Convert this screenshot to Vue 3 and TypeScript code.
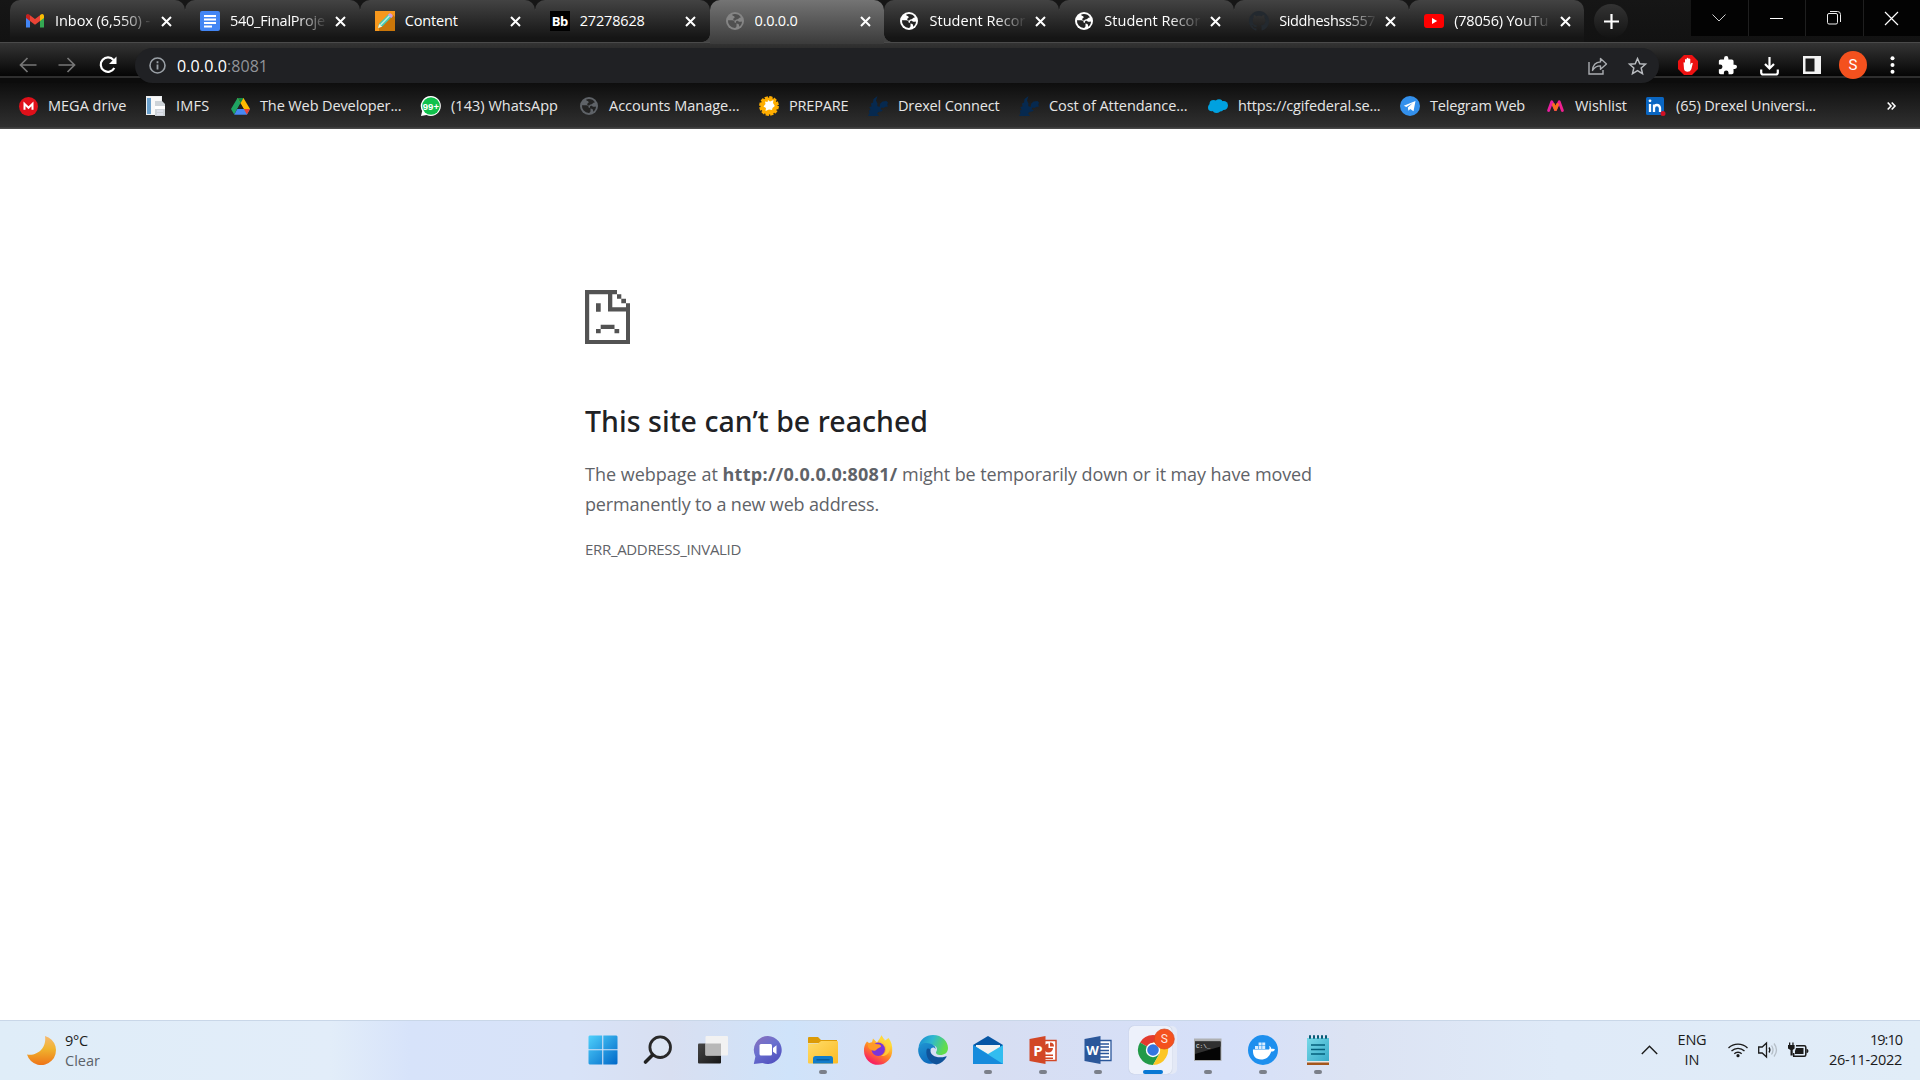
<script setup lang="ts">
interface Tab { icon: string; title: string; w: number; active?: boolean; faded?: boolean }
interface Bookmark { icon: string; label: string; slot: number; w: number }

const tabs: Tab[] = [
  { icon: 'gmail', title: 'Inbox (6,550) -', w: 95, faded: true },
  { icon: 'docs', title: '540_FinalProje', w: 95, faded: true },
  { icon: 'pencil', title: 'Content', w: 53 },
  { icon: 'bb', title: '27278628', w: 65 },
  { icon: 'globeGrey', title: '0.0.0.0', w: 43, active: true },
  { icon: 'globe', title: 'Student Recor', w: 96, faded: true },
  { icon: 'globe', title: 'Student Recor', w: 96, faded: true },
  { icon: 'github', title: 'Siddheshss557', w: 96, faded: true },
  { icon: 'youtube', title: '(78056) YouTu', w: 94, faded: true },
]

const bookmarks: Bookmark[] = [
  { icon: 'mega', label: 'MEGA drive', slot: 128, w: 78.5 },
  { icon: 'imfs', label: 'IMFS', slot: 84, w: 33.5 },
  { icon: 'drive', label: 'The Web Developer...', slot: 191, w: 141.5 },
  { icon: 'whatsapp', label: '(143) WhatsApp', slot: 158, w: 107 },
  { icon: 'globeDark', label: 'Accounts Manage...', slot: 180, w: 130.5 },
  { icon: 'badge', label: 'PREPARE', slot: 109, w: 59.5 },
  { icon: 'dragon', label: 'Drexel Connect', slot: 151, w: 101.5 },
  { icon: 'dragon', label: 'Cost of Attendance...', slot: 189, w: 138.5 },
  { icon: 'cloud', label: 'https://cgifederal.se...', slot: 192, w: 142.5 },
  { icon: 'telegram', label: 'Telegram Web', slot: 145, w: 95 },
  { icon: 'myntra', label: 'Wishlist', slot: 101, w: 52 },
  { icon: 'linkedin', label: '(65) Drexel Universi...', slot: 175, w: 140 },
]

const apps = ['start', 'search', 'taskview', 'chat', 'explorer', 'firefox', 'edge', 'mail', 'powerpoint', 'word', 'chrome', 'cmd', 'docker', 'notepad']
const running = ['explorer', 'mail', 'powerpoint', 'word', 'cmd', 'docker', 'notepad']

// Spreads a label's letters evenly so that it takes the given width.
const vFit = {
  mounted(el: HTMLElement, binding: { value: number }) {
    const n = (el.textContent ?? '').length
    const width = el.getBoundingClientRect().width
    if (n > 0) el.style.letterSpacing = `${((binding.value - width) / n).toFixed(3)}px`
  },
}
</script>

<template>
  <div class="screen">
    <header class="strip">
      <div class="tabs">
        <div v-for="(t, i) in tabs" :key="i" class="tab" :class="{ active: t.active, sep: i !== 3 && i !== 4 && i !== 8 }">
          <span class="fav">
            <svg v-if="t.icon === 'gmail'" width="20" height="20" viewBox="0 0 20 20"><path d="M1 4.5v12h4V9z" fill="#4285f4" /><path d="M19 4.5v12h-4V9z" fill="#34a853" /><path d="M15 4.2V10l4-3V5c0-2-2-2.600-3.200-1.500z" fill="#fbbc04" /><path d="M5 10V4.200l5 3.800 5-3.800V10l-5 3.800z" fill="#ea4335" /><path d="M1 5v2l4 3V4.200l-.800-.700C3 2.400 1 3 1 5z" fill="#c5221f" /></svg>
            <svg v-else-if="t.icon === 'docs'" width="20" height="20" viewBox="0 0 20 20"><rect width="20" height="20" rx="2" fill="#4285f4" /><path d="M4 5h12M4 8.500h12M4 12h12M4 15.500h8" stroke="#fff" stroke-width="1.800" /></svg>
            <svg v-else-if="t.icon === 'pencil'" width="20" height="20" viewBox="0 0 20 20"><path d="M0 0h20v20H0z" fill="#f7981d" /><path d="M4 17 18 4l2 2v14H4z" fill="#ca7609" /><path d="m3 17 1.200-4.500L14 2.800l3 3L7.300 15.600z" fill="#46c8b3" /><path d="m5.500 14 9-9.300" stroke="#b7f1dc" stroke-width="1.600" /><path d="m13 3.800 3.200 3.100 1.500-1.500c.8-.8-2.200-3.800-3.200-3z" fill="#d79bdc" /><path d="m3 17 1.200-4 2.900 2.800z" fill="#fff0cc" /></svg>
            <span v-else-if="t.icon === 'bb'" class="bb">Bb</span>
            <svg v-else-if="t.icon === 'github'" width="20" height="20" viewBox="0 0 16 16"><path fill="#23292f" d="M8 0C3.580 0 0 3.580 0 8c0 3.540 2.290 6.530 5.470 7.590.4.070.55-.17.55-.38 0-.19-.01-.82-.01-1.490-2.010.37-2.530-.49-2.690-.94-.09-.23-.48-.94-.82-1.130-.28-.15-.68-.52-.01-.53.63-.01 1.080.58 1.230.82.72 1.210 1.870.87 2.330.66.070-.52.280-.87.510-1.070-1.780-.2-3.640-.89-3.640-3.950 0-.87.310-1.590.820-2.150-.08-.2-.36-1.020.080-2.120 0 0 .67-.21 2.200.82.64-.18 1.320-.27 2-.27s1.360.09 2 .27c1.530-1.040 2.200-.82 2.200-.82.44 1.100.160 1.920.080 2.120.510.560.820 1.270.820 2.150 0 3.070-1.870 3.750-3.650 3.950.290.250.540.730.540 1.480 0 1.070-.01 1.930-.01 2.200 0 .210.150.460.550.380A8.010 8.010 0 0 0 16 8c0-4.420-3.580-8-8-8z" /></svg>
            <svg v-else-if="t.icon === 'youtube'" width="20" height="20" viewBox="0 0 20 20"><rect y="3" width="20" height="14" rx="3" fill="#f00" /><path d="m8 7 5.200 3L8 13z" fill="#fff" /></svg>
            <svg v-else width="18" height="18" viewBox="0 0 18 18"><circle cx="9" cy="9" r="9" :fill="t.icon === 'globe' ? '#fff' : '#858585'" /><path d="M2 8.200h4c2.200 0 2.700 1 2.700 2.600h1.800v3.100c0 1.100-.8 1.500-1.700 2.100A7 7 0 0 1 2 8.200zM6 2.700C9 1.300 13.500 2.400 15 5.500c-1.300 0-1.800.3-2.600 1.200-.8.800-3.300.6-3.300 2-1-.3-1.900-.5-1.900-1.700 0-1 1.500-.7 1.500-1.800 0-1.300-1.700-.9-2.700-2.500zM16 9.500c0 2-1 4-2.800 5.300 0-1.800-.2-2.900-1.700-3.100-1-.1-1.700-.8-1.500-1.700.2-1.400 1.600-1.300 2.300-.8.900.6 2.200.9 3.700.3z" :fill="t.icon === 'globe' ? '#252525' : '#505050'" /></svg>
          </span>
          <span class="title" :class="{ faded: t.faded }"><span v-fit="t.w" class="txt">{{ t.title }}</span></span>
          <svg class="close" width="11" height="11" viewBox="0 0 11 11"><path d="m1 1 9 9M10 1l-9 9" stroke="#fff" stroke-width="2" /></svg>
        </div>
      </div>
      <div class="newtab"><svg width="15" height="15" viewBox="0 0 15 15"><path d="M7.500 0v15M0 7.500h15" stroke="#fff" stroke-width="2.200" /></svg></div>
      <div class="wbtns">
        <div><svg width="14" height="8" viewBox="0 0 14 8"><path d="m.5.500 6.500 6.500L13.500.500" fill="none" stroke="#ccc" /></svg></div>
        <div><svg width="13" height="13" viewBox="0 0 13 13"><path d="M0 6.500h13" stroke="#fff" /></svg></div>
        <div><svg width="14" height="14" viewBox="0 0 14 14" fill="none" stroke="#eee"><rect x=".5" y="2.500" width="10" height="10.500" rx="1.500" /><path d="M3 .5h7.500a3 3 0 0 1 3 3V11" /></svg></div>
        <div><svg width="13" height="13" viewBox="0 0 13 13"><path d="m0 0 13 13M13 0 0 13" stroke="#fff" stroke-width="1.200" /></svg></div>
      </div>
    </header>

    <div class="toolbar">
      <div class="nav"><svg width="18" height="16" viewBox="0 0 18 16" fill="none" stroke="#777" stroke-width="1.700"><path d="M17.500 8H1.500M8.500 1l-7 7 7 7" /></svg></div>
      <div class="nav"><svg width="18" height="16" viewBox="0 0 18 16" fill="none" stroke="#777" stroke-width="1.700"><path d="M.5 8h16M9.500 1l7 7-7 7" /></svg></div>
      <div class="nav"><svg width="20" height="18" viewBox="0 0 20 18"><path d="M15.500 4A7.200 7.200 0 1 0 16.300 12" fill="none" stroke="#fff" stroke-width="2.200" /><path d="M18.500.500v7.500H11z" fill="#fff" /></svg></div>
      <div class="omni">
        <svg class="info" width="17" height="17" viewBox="0 0 17 17"><circle cx="8.500" cy="8.500" r="7.500" fill="none" stroke="#9aa0a6" stroke-width="1.600" /><path d="M8.500 7.500v5M8.500 4.300v1.900" stroke="#9aa0a6" stroke-width="1.800" /></svg>
        <span v-fit="50" class="host">0.0.0.0</span><span v-fit="41" class="port">:8081</span>
        <span class="grow"></span>
        <svg class="share" width="20" height="18" viewBox="0 0 20 18" fill="none" stroke="#aaadb1" stroke-width="1.400"><path d="M1 5v12h14v-4" /><path d="M4.500 13.500C4.800 8 7.500 5.200 12.500 4.900V1.500l6 5.400-6 5.300V8.900c-4 0-6.200 1.500-8 4.600z" stroke-linejoin="round" /></svg>
        <svg width="19" height="18" viewBox="0 0 19 18"><path d="m9.500 1.500 2.300 5.200 5.700.5-4.300 3.800 1.300 5.600-5-3-5 3L5.800 11 1.500 7.200l5.700-.5z" fill="none" stroke="#b8bbbf" stroke-width="1.500" /></svg>
      </div>
      <div class="act a1"><svg width="20" height="20" viewBox="0 0 20 20"><path d="M6 0h8l6 6v8l-6 6H6l-6-6V6z" fill="#ed1111" /><path d="M5.500 7.500q1-.8 1.500.3V10V4.500q.9-1.200 1.700 0V8 3.300q1-1.200 1.800 0V8 4q1-1.200 1.800 0v6l.6-1.600q1.100-1.200 1.900-.2l-1.500 6q-1 2.500-3.800 2.500-3 0-3.500-2.700z" fill="#fff" /></svg></div>
      <div class="act a2"><svg width="19" height="19" viewBox="0 0 22 22"><path fill="#fff" d="M19.500 10H18V6c0-1.100-.9-2-2-2h-4V2.500a2.500 2.500 0 0 0-5 0V4H3c-1.100 0-1.990.9-1.990 2v3.800H2.500a2.700 2.700 0 0 1 0 5.400H1V19c0 1.100.9 2 2 2h3.800v-1.500a2.700 2.700 0 0 1 5.400 0V21H16c1.100 0 2-.9 2-2v-4h1.500a2.500 2.500 0 0 0 0-5z" /></svg></div>
      <div class="act a3"><svg class="dl" width="19" height="19" viewBox="0 0 19 19" fill="none" stroke="#fff" stroke-width="2.200"><path d="M9.500 0v11M5 7l4.500 4.500L14 7M1.200 12.500v3q0 2 2 2h12.600q2 0 2-2v-3" /></svg></div>
      <div class="act a4"><svg width="18" height="18" viewBox="0 0 18 18"><path d="M0 0h18v18H0z" fill="#f2f2f2" /><path d="M2.500 2.500h9v13h-9z" fill="#1a1a1a" /></svg></div>
      <div class="act a5"><span class="avatar">S</span></div>
      <div class="act a6"><svg width="5" height="18" viewBox="0 0 5 18" fill="#fff"><circle cx="2.500" cy="2.200" r="2" /><circle cx="2.500" cy="9" r="2" /><circle cx="2.500" cy="15.800" r="2" /></svg></div>
    </div>

    <nav class="marks">
      <div v-for="b in bookmarks" :key="b.label" class="mark" :style="{ width: b.slot + 'px' }">
        <span class="mi">
          <svg v-if="b.icon === 'mega'" width="19" height="19" viewBox="0 0 19 19"><circle cx="9.500" cy="9.500" r="9.500" fill="#e0101a" /><path d="M5.500 12.700V6.800l4 4 4-4v5.900" fill="none" stroke="#fff" stroke-width="2" /></svg>
          <svg v-else-if="b.icon === 'imfs'" width="20" height="20" viewBox="0 0 20 20"><path d="M0 0h16v19H0z" fill="#eceef0" /><path d="M1 2h4v16H1z" fill="#6aa0cc" /><path d="M5 1h10v18H5z" fill="#f8f8f8" /><path d="M9 5h7l3 3v12H9z" fill="#cdd3d8" /><path d="M9 10h10v3H9z" fill="#fff" /><path d="M11 15h6M11 18h6" stroke="#eef" /></svg>
          <svg v-else-if="b.icon === 'drive'" width="19" height="17" viewBox="0 0 19 17"><path d="M6.500 0h6L6 11.200 3.200 16.500 0 11z" fill="#1fa463" /><path d="M6.500 0h6L19 11h-6.200z" fill="#ffba00" /><path d="M6.300 11H19l-3.100 5.700H3.200z" fill="#4688f4" /><path d="M6.500 0h6L9.500 5.200z" fill="#118847" /><path d="m9.500 5.500 3.100 5.500H6.400z" fill="#202020" /><path d="M19 11h-6.200l3.100 5.500z" fill="#e94235" /></svg>
          <svg v-else-if="b.icon === 'whatsapp'" width="20" height="20" viewBox="0 0 20 20"><path d="M10 0a10 10 0 1 1-4.500 19L0 20l1.200-5A10 10 0 0 1 10 0z" fill="#fff" /><circle cx="10" cy="10" r="8.800" fill="#10c14c" /><text x="9.900" y="13.600" fill="#fff" font-size="9.500" font-weight="700" text-anchor="middle" font-family="Liberation Sans, sans-serif">99+</text></svg>
          <svg v-else-if="b.icon === 'globeDark'" width="18" height="18" viewBox="0 0 18 18"><circle cx="9" cy="9" r="9" fill="#5f6368" /><path d="M2 8.200h4c2.200 0 2.700 1 2.700 2.600h1.800v3.100c0 1.100-.8 1.500-1.700 2.100A7 7 0 0 1 2 8.200zM6 2.700C9 1.300 13.500 2.400 15 5.500c-1.300 0-1.800.3-2.600 1.200-.8.800-3.300.6-3.300 2-1-.3-1.900-.5-1.900-1.700 0-1 1.500-.7 1.500-1.800 0-1.300-1.700-.9-2.700-2.500zM16 9.500c0 2-1 4-2.800 5.300 0-1.800-.2-2.900-1.700-3.100-1-.1-1.700-.8-1.500-1.700.2-1.400 1.600-1.300 2.300-.8.900.6 2.200.9 3.700.3z" fill="#232323" /></svg>
          <svg v-else-if="b.icon === 'badge'" width="20" height="20" viewBox="0 0 20 20"><circle cx="10" cy="10" r="8.600" fill="#ffae00" stroke="#ffae00" stroke-width="2.600" stroke-dasharray="3.200 1.300" /><path d="m9 4 2 1.500L14.500 4l-.5 3 1.800 3-2.300 2-.5 2-3-.6L6.500 15 7 12l-2.500-1.500L6.500 8 6 5.500l2.500.5z" fill="#fff" /></svg>
          <svg v-else-if="b.icon === 'dragon'" width="20" height="20" viewBox="0 0 20 20"><path d="M0 20 1.500 17 .8 14.500l1.800-.5-1.300-3 2.200-.5-.5-3 2-1L5.500 3 9.500 0 8 4.500l1.500 3-.3 2.500 2.300 1 .8-3.500L14.500 5.500l4-.5 1.500 1.500-.8 2 .8 2-3 .5-1.500 1-2-.5-1 2 2.300.6-1 1.200-3.300.7-1.500 1.500 2 2.500z" fill="#06294f" /></svg>
          <svg v-else-if="b.icon === 'cloud'" width="20" height="14" viewBox="0 0 20 14" fill="#00a1e0"><circle cx="5.500" cy="5" r="4" /><circle cx="11" cy="4" r="3.800" /><circle cx="15.500" cy="6.500" r="4.500" /><circle cx="3.800" cy="8.500" r="3.800" /><circle cx="8.500" cy="10" r="4" /><circle cx="12" cy="9" r="3.500" /></svg>
          <svg v-else-if="b.icon === 'telegram'" width="20" height="20" viewBox="0 0 20 20"><circle cx="10" cy="10" r="10" fill="#3390ec" /><path d="M3.800 9.800 15.500 5l-2 10.200-3.300-2.300-1.800 1.800-.6-3.300 5-4.500-6.500 4z" fill="#fff" /></svg>
          <svg v-else-if="b.icon === 'myntra'" width="17" height="12" viewBox="0 0 17 12" fill="none" stroke-linecap="round" stroke-linejoin="round"><path d="M1.600 10.400 4.800 1.800 8.500 9.500" stroke="#e91ea0" stroke-width="2.900" /><path d="m8.500 9.500 3.700-7.700 3.200 8.600" stroke="#f01f90" stroke-width="2.900" /><path d="M6.500 4.500 8.500 9.500l2-5" stroke="#f7701c" stroke-width="2.900" /></svg>
          <svg v-else width="20" height="20" viewBox="0 0 20 20"><rect width="18" height="18" y="1" rx="1.500" fill="#0a66c2" /><path d="M4 8v8M8 16V8.500M8 12q.3-3 2.900-3T14 12v4" fill="none" stroke="#fff" stroke-width="2.300" /><circle cx="4" cy="4.800" r="1.400" fill="#fff" /><circle cx="17" cy="17.500" r="2.500" fill="#d11124" /></svg>
        </span>
        <span v-fit="b.w" class="txt">{{ b.label }}</span>
      </div>
      <svg class="more" width="9" height="8" viewBox="0 0 9 8"><path d="M.7.500 4 4 .7 7.500M4.700.500 8 4 4.700 7.500" fill="none" stroke="#fff" stroke-width="1.600" /></svg>
    </nav>

    <main class="page">
      <svg width="45" height="54" viewBox="0 0 45 54" fill="#535353"><path d="M0 0h32v4.300h-4.700v13H45V54H0zM4.200 4.300V50H41V21.500H23V4.300z" fill-rule="evenodd" /><path d="M32 4.300h4.300v4.400H32zM36.300 8.700H41v4.500h-4.700zM41 13.200h4v5h-4zM11 13.300h4.700v8.400H11zM15.700 34.700h13.800V39H15.700zM11 39h4.700v4.300H11zM29.500 39h4.700v4.300h-4.700z" /></svg>
      <h1><span v-fit="343">This site can’t be reached</span></h1>
      <p><span v-fit="137.500">The webpage at </span><strong v-fit="175">http://0.0.0.0:8081/</strong><span v-fit="414.500"> might be temporarily down or it may have moved</span><br /><span v-fit="294">permanently to a new web address.</span></p>
      <div class="code"><span v-fit="156">ERR_ADDRESS_INVALID</span></div>
    </main>

    <footer class="taskbar">
      <div class="weather">
        <svg width="28" height="28" viewBox="0 0 28 28"><defs><linearGradient id="moon" x2="0" y2="1"><stop stop-color="#f6ba70" /><stop offset=".45" stop-color="#f0b32e" /><stop offset="1" stop-color="#ee7418" /></linearGradient></defs><path d="M18 0a14.800 14.800 0 1 1-18 18.500C10 20.500 20 12 18 0z" fill="url(#moon)" /></svg>
        <div class="wtext"><div><span v-fit="23">9°C</span></div><div class="dim"><span v-fit="35">Clear</span></div></div>
      </div>
      <div class="apps">
        <div v-for="a in apps" :key="a" class="app" :class="{ focus: a === 'chrome' }">
          <svg v-if="a === 'start'" width="30" height="30" viewBox="0 0 30 30"><defs><linearGradient id="win" x2="1" y2="1"><stop stop-color="#4fd0fb" /><stop offset="1" stop-color="#0067c8" /></linearGradient></defs><path d="M1.500.500H14.200V14.200H.500V1.500zM15.300.500H28.500l1 1V14.200H15.300zM.500 15.300H14.200V29.500H1.500l-1-1zM15.300 15.300H29.500V28.500l-1 1H15.300z" fill="url(#win)" /></svg>
          <svg v-else-if="a === 'search'" width="30" height="30" viewBox="0 0 30 30"><circle cx="17.200" cy="12.200" r="10.300" fill="#dfe7f4" fill-opacity=".8" stroke="#292929" stroke-width="2.800" /><path d="m9.500 20-7 7" stroke="#222" stroke-width="3.600" stroke-linecap="round" /></svg>
          <svg v-else-if="a === 'taskview'" width="30" height="30" viewBox="0 0 30 30"><defs><linearGradient id="dark" x2="1" y2="1"><stop stop-color="#464646" /><stop offset="1" stop-color="#171717" /></linearGradient></defs><rect y="8.500" width="23" height="20" rx="1" fill="url(#dark)" /><rect x="7.500" y="1" width="22.500" height="19.500" rx="1" fill="#f2f2f2" /><path d="M7.500 8.500H23v12H7.500z" fill="#b8b8b8" /></svg>
          <svg v-else-if="a === 'chat'" width="30" height="30" viewBox="0 0 30 30"><defs><linearGradient id="chat" x2=".6" y2="1"><stop stop-color="#8d70ba" /><stop offset=".5" stop-color="#6a70cf" /><stop offset="1" stop-color="#5453c0" /></linearGradient></defs><path d="M15 1a14 14 0 1 1-5.500 27L.8 29l1.600-7.500A14 14 0 0 1 15 1z" fill="url(#chat)" /><rect x="6.500" y="9" width="12.500" height="11.500" rx="1.500" fill="#fff" /><path d="m20 13 3.500-2.800v9L20 16.800z" fill="#fff" /></svg>
          <svg v-else-if="a === 'explorer'" width="30" height="30" viewBox="0 0 30 30"><defs><linearGradient id="fold" x2="1" y2="1"><stop stop-color="#ffdc69" /><stop offset="1" stop-color="#fbbb24" /></linearGradient></defs><path d="M0 8V3q0-1 1-1h9l3 3h16v3z" fill="#dc9b07" /><path d="M0 8.500h10L13 6h16q1 0 1 1v20.500q0 1-1 1H1q-1 0-1-1z" fill="url(#fold)" /><path d="M5 28.500v-5Q5 21 7.500 21h15q2.500 0 2.500 2.500v5z" fill="#117cca" /><path d="M8.500 24.800h13" stroke="#075895" stroke-width="1.300" /></svg>
          <svg v-else-if="a === 'firefox'" width="30" height="30" viewBox="0 0 30 30"><defs><linearGradient id="fox" x1=".8" x2=".25" y2="1"><stop offset=".2" stop-color="#ffdb3a" /><stop offset=".55" stop-color="#ff8524" /><stop offset=".9" stop-color="#f9255e" /></linearGradient></defs><path d="M4 6.500 6 8l3-.8L10 3.500l4 4 3-4.500 1.500-2.700 3 5.700 4-3c3 4 4 8 3.700 12.500A14 14 0 0 1 1 16C.7 12 2 9 4 6.500z" fill="url(#fox)" /><circle cx="15.200" cy="14.300" r="6.700" fill="#7b35d8" /><path d="M5 9c3-2 6-1 9 .3 4 0 4 1.500 4 2.500l-4 2.300c-1 2.300-4 2-5.500 1C6 14.500 4.500 12 5 9z" fill="#ff9a28" /><path d="M18.500.500c-1 4 2.500 5.500 3.500 9 3 5-.5 10-4 11.500 5 .5 9-3 9-8C27 7 22 7 18.500.500z" fill="#ffd53f" opacity=".8" /></svg>
          <svg v-else-if="a === 'edge'" width="30" height="30" viewBox="0 0 30 30"><defs><linearGradient id="eg" x2="1" y2=".3"><stop stop-color="#1686d6" /><stop offset=".5" stop-color="#2fb8cf" /><stop offset="1" stop-color="#62dd4b" /></linearGradient><linearGradient id="eb" x2=".5" y2="1"><stop stop-color="#2095d2" /><stop offset="1" stop-color="#0c68bb" /></linearGradient></defs><path d="M.5 12C2 4 8 0 15 0c9 0 15 6.500 15 13 0 5-4 7-7.500 7S18 18.500 18 17.500c0-1 1-1.500 1-3.500 0-2-2.500-4-6-4C8 10 2 10 .5 12z" fill="url(#eg)" /><path d="M.2 14C1 9 6 7.500 10 8.200c5 .8 8 3 7.500 6-1-2.200-4-2.200-5 .6-1.500 5 3 11 9 11-3 3-14 6-19-3C.7 20 0 17 .2 14z" fill="url(#eb)" /><path d="M8.500 15c-1 7 3 13 10 14.500 4.500-1 8-4 10-7.500.5-.9-.3-1-1-.6C20 24 12 21 12.300 15c0-1.200-3-2.500-3.800 0z" fill="#10539a" /></svg>
          <svg v-else-if="a === 'mail'" width="30" height="30" viewBox="0 0 30 30"><path d="M0 10 15 1l15 9v4H0z" fill="#0756a4" /><path d="M3 10h24v8L15 25 3 18z" fill="#f2f2f2" /><path d="m0 10 15 9 15-9v19H0z" fill="#32bdf0" /><path d="M0 10v19h30z" fill="#168bdc" /></svg>
          <svg v-else-if="a === 'powerpoint' || a === 'word'" width="30" height="30" viewBox="0 0 30 30">
            <template v-if="a === 'word'"><path d="M14 5.500h14v20H14z" fill="#fff" stroke="#2b579a" stroke-width="1.300" /><path d="M16 9h10M16 12h10M16 15.500h10M16 18.500h10M16 22h10" stroke="#2b579a" stroke-width="1.300" /><path d="M1.500 4 17.500 1v28L1.500 26z" fill="#2b579a" /><text x="9.500" y="20" fill="#fff" font-size="13" font-weight="700" text-anchor="middle" font-family="Open Sans, sans-serif">W</text></template>
            <template v-else><path d="M14 5.500h14v20H14z" fill="#fff" stroke="#d24726" stroke-width="1.500" /><path d="M20.500 8.500a4.500 4.500 0 1 0 4.500 4.500h-4.500zM22 7.500v4h4a4 4 0 0 0-4-4zM17 19.500h8v1.600h-8zM17 22.500h8V24h-8z" fill="#d24726" /><path d="M1.500 4 17.500 1v28L1.500 26z" fill="#d24726" /><text x="10" y="20.500" fill="#fff" font-size="15" font-weight="700" text-anchor="middle" font-family="Open Sans, sans-serif">P</text></template>
          </svg>
          <svg v-else-if="a === 'chrome'" class="chrome" width="38" height="38" viewBox="0 0 38 38"><path d="M15 23 2 15.500A15 15 0 0 1 28 15.500H15z" fill="#e33b2e" /><path d="M15 23 2 15.500A15 15 0 0 0 15 38l6.500-11.300z" fill="#229a48" /><path d="M15 38a15 15 0 0 0 13-22.500H15l6.500 11.300z" fill="#fcc624" /><circle cx="15" cy="23" r="7.200" fill="#fff" /><circle cx="15" cy="23" r="5.800" fill="#3475e0" /><circle cx="26.300" cy="12" r="10" fill="#f4511e" stroke="#d9431a" stroke-width=".7" /><text x="26.300" y="16.300" fill="#ffe6df" font-size="12" text-anchor="middle" font-family="Roboto, sans-serif">S</text></svg>
          <svg v-else-if="a === 'cmd'" width="30" height="30" viewBox="0 0 30 30"><rect x="1" y="3.500" width="27.500" height="22.500" fill="#aeb0b2" /><path d="M2 6.500h25.500V25H2z" fill="#050505" /><path d="M2 6.500h25.500v5L2 19z" fill="#303030" /><text x="3" y="12.500" fill="#eee" font-size="6" font-family="Liberation Mono, monospace">C:\_</text></svg>
          <svg v-else-if="a === 'docker'" width="30" height="30" viewBox="0 0 30 30"><circle cx="15" cy="15" r="15" fill="#1d8fee" /><path d="M5 14.500h15.500c1.300 0 1.300-2 .6-3.500 1.700.7 2.300 2 2.300 3 1.500-.5 2.800-.3 3.600.4-.8 1.700-2.200 2-3.700 2C21 22 18 24.500 13 24.500c-5.500 0-8.500-3.500-8-10z" fill="#fff" /><path d="M7 11h3v3H7zM10.600 11h3v3h-3zM14.200 11h3v3h-3zM10.600 7.600h3v3h-3zM14.200 7.600h3v3h-3z" fill="#d9edff" /></svg>
          <svg v-else width="30" height="30" viewBox="0 0 30 30"><defs><linearGradient id="np" x2="1" y2="1"><stop stop-color="#78d9e8" /><stop offset="1" stop-color="#35a9c8" /></linearGradient></defs><path d="M4 3h22v24H4z" fill="url(#np)" /><path d="M4 26h22v1.700H4z" fill="#e7e7e7" /><path d="M4 27.500h22V30H4z" fill="#a4561c" /><path d="M8 10h14M8 14.500h14M8 19h14" stroke="#05607c" stroke-width="1.600" /><path d="M7 1v2M11 1v2M15 1v2M19 1v2M23 1v2" stroke="#075a75" stroke-width="2" stroke-linecap="round" /></svg>
          <i v-if="running.includes(a)" class="dot"></i><i v-if="a === 'chrome'" class="bar"></i>
        </div>
      </div>
      <div class="tray">
        <svg width="17" height="10" viewBox="0 0 17 10"><path d="m.8 9 7.700-7.700L16.200 9" fill="none" stroke="#1b1b1b" stroke-width="1.400" /></svg>
        <div class="lang"><div><span v-fit="29">ENG</span></div><div><span v-fit="15">IN</span></div></div>
        <svg class="wifi" width="20" height="16" viewBox="0 0 20 16" fill="none" stroke="#1b1b1b" stroke-width="1.300"><path d="M.5 6a13.500 13.500 0 0 1 19 0M3.500 9a9.200 9.200 0 0 1 13 0M6.300 11.800a5.200 5.200 0 0 1 7.400 0" /><circle cx="10" cy="13.700" r="1.600" fill="#1b1b1b" stroke="none" /></svg>
        <svg class="vol" width="20" height="18" viewBox="0 0 20 18" fill="none" stroke="#1b1b1b" stroke-width="1.300"><path d="M.7 6h3.500L8.500 2v14L4.200 12H.700z" /><path d="M11 6.500q1.800 2.500 0 5" /><path d="M13.500 4.500q3 4.500 0 9M16 2.500q5 6.500 0 13" stroke="#b5bec7" /></svg>
        <svg class="bat" width="21" height="17" viewBox="0 0 21 17"><path d="M8 3.700h8.300q1.500 0 1.500 1.500v7.600q0 1.500-1.500 1.500H5.700V11" fill="none" stroke="#1b1b1b" stroke-width="1.500" /><path d="M8 6h7.500v6H7V9z" fill="#1b1b1b" /><path d="M18.500 6.800q2 .3 2 2.200t-2 2.200zM0 3h1V.500h1.300V3h2V.500h1.300V3h1v3.500L4.700 8v5.500H2.500V8L0 6.500z" fill="#1b1b1b" /></svg>
        <div class="clock"><div><span v-fit="32">19:10</span></div><div><span v-fit="73">26-11-2022</span></div></div>
      </div>
    </footer>
  </div>
</template>

<style>
body { margin: 0; overflow: hidden; }
</style>

<style scoped>
* { box-sizing: border-box; }
svg { display: block; flex: none; overflow: visible; }
.screen { width: 1920px; height: 1080px; display: flex; flex-direction: column; background: #fff; font-family: "Open Sans", "Noto Sans", sans-serif; overflow: hidden; }
.strip { height: 42px; flex: none; display: flex; background: linear-gradient(#161616, #121212); padding-left: 10px; }
.tabs { display: flex; width: 1574px; }
.tab { position: relative; flex: 1 1 0; min-width: 0; display: flex; align-items: center; height: 42px; padding-left: 15px; background: linear-gradient(#434343, #151515 90%); border-radius: 10px 10px 0 0; }
.tab.sep::after { content: ""; position: absolute; right: -1px; top: 9px; width: 1px; height: 26px; background: #5c5c5c; }
.tab.active { height: 44px; padding-bottom: 2px; background: linear-gradient(#747474, #3b3b3b); z-index: 2; }
.tab.active::before, .tab.active::after { content: ""; position: absolute; bottom: 2px; width: 8px; height: 8px; }
.tab.active::before { left: -8px; background: radial-gradient(circle at 0 0, transparent 7.500px, #424242 8px); }
.tab.active::after { right: -8px; background: radial-gradient(circle at 100% 0, transparent 7.500px, #424242 8px); }
.fav { width: 20px; display: flex; justify-content: center; flex: none; }
.bb { width: 20px; height: 20px; background: #000; color: #fff; font: 700 13px/20px "Open Sans", sans-serif; text-align: center; letter-spacing: -0.500px; }
.title { width: 97px; margin-left: 10px; height: 24px; line-height: 23px; overflow: hidden; white-space: pre; color: #fff; font-size: 14.500px; flex: none; }
.title.faded { -webkit-mask-image: linear-gradient(90deg, #000 68%, transparent 101%); mask-image: linear-gradient(90deg, #000 68%, transparent 101%); }
.txt { white-space: pre; }
.close { margin-left: 8.500px; }
.newtab { width: 34px; height: 34px; margin: 4px 0 0 10px; border-radius: 50%; background: linear-gradient(#333, #131313); display: flex; align-items: center; justify-content: center; }
.wbtns { margin-left: auto; display: flex; width: 229px; height: 36px; background: #030303; }
.wbtns div { flex: 1; display: flex; align-items: center; justify-content: center; border-right: 1px solid #1f1f1f; }
.wbtns div:last-child { border: 0; }
.toolbar { height: 41px; flex: none; display: flex; background: linear-gradient(#4a4a4a 0 1px, #343434 1px, #050505 34px, #2e2e2e 34px 35.500px, #0c0c0c 35.500px); padding-left: 8px; }
.nav { width: 39.500px; height: 46px; display: flex; align-items: center; justify-content: center; }
.nav:nth-child(3) { width: 48px; padding-right: 7px; }
.omni { width: 1524px; height: 35px; margin-top: 6px; border-radius: 18px; background: #202124; display: flex; align-items: center; padding: 0 12px 0 14px; font-size: 16px; line-height: 22px; }
.info { margin-right: 11px; }
.host { color: #fff; }
.port { color: #919499; }
.grow { flex: 1; }
.share { margin-right: 20px; }
.act { height: 46px; display: flex; align-items: center; justify-content: center; }
.a1 { margin-left: 8px; width: 41px; }
.a2 { width: 39px; }
.a3 { width: 45px; }
.dl { margin-top: 2px; }
.a4 { width: 40px; }
.a5 { width: 42px; }
.a6 { width: 37px; }
.avatar { width: 28px; height: 28px; border-radius: 50%; background: #f4511e; color: #fff; font: 15px/28px Roboto, sans-serif; text-align: center; }
.marks { height: 46px; flex: none; display: flex; align-items: center; padding-left: 18px; background: linear-gradient(#0e0e0e, #303030 44px, #484848 45px); }
.mark { display: flex; align-items: center; flex: none; color: #e6e6e6; font-size: 14.500px; line-height: 22px; }
.mi { width: 20px; margin-right: 10px; display: flex; justify-content: center; flex: none; }
.more { margin-left: 66px; }
.page { flex: 1; padding: 161px 0 0 585px; color: #5f6368; }
h1 { margin: 54px 0 0; font-family: "Noto Sans", sans-serif; font-weight: 500; font-size: 28.500px; line-height: 46px; color: #202124; white-space: pre; }
p { margin: 15px 0 0; font-size: 18px; line-height: 30px; white-space: pre; }
.code { margin-top: 19px; font-size: 15px; line-height: 22px; }
.taskbar { height: 60px; flex: none; display: flex; position: relative; border-top: 1px solid #c9d7e8; color: #1b1b1b; font-size: 14.500px; line-height: 20px; background: linear-gradient(90deg, #dfedf8, #e2edf9 330px, #d7e3fa 410px, #d8e3f8 570px, #d8dff1 670px, #cfe3fa 790px, #d7e0f5 890px, #d7def2 980px, #d6e0f9 1230px, #dce3f3 1350px, #dfeaf8 1560px, #e1edf8); }
.weather { width: 575px; display: flex; padding: 14.500px 0 0 27px; }
.wtext { margin: -5px 0 0 10px; }
.dim { color: #5b6269; }
.apps { display: flex; width: 770px; }
.app { position: relative; width: 55px; height: 58px; display: flex; align-items: center; justify-content: center; }
.app > svg { position: relative; }
.focus::before { content: ""; position: absolute; left: 4px; top: 5px; width: 43px; height: 48px; border-radius: 5px; background: #edf1fb; box-shadow: 0 0 1px #9eabc0, 5px 0 0 #e4e9f6; }
.chrome { left: 4px; top: -4px; }
.dot, .bar { position: absolute; bottom: 5px; left: 24px; width: 8px; height: 4px; border-radius: 2px; background: #7b808a; }
.bar { left: 18px; width: 20px; background: #0878d4; }
.tray { margin-left: auto; display: flex; align-items: center; padding-right: 18px; height: 58px; }
.lang { width: 32px; margin: 0 20px 0 18px; text-align: center; }
.wifi { margin-right: 10px; }
.vol { margin-right: 10px; }
.clock { width: 74px; margin: -1px 0 0 19px; text-align: right; white-space: nowrap; }
</style>
